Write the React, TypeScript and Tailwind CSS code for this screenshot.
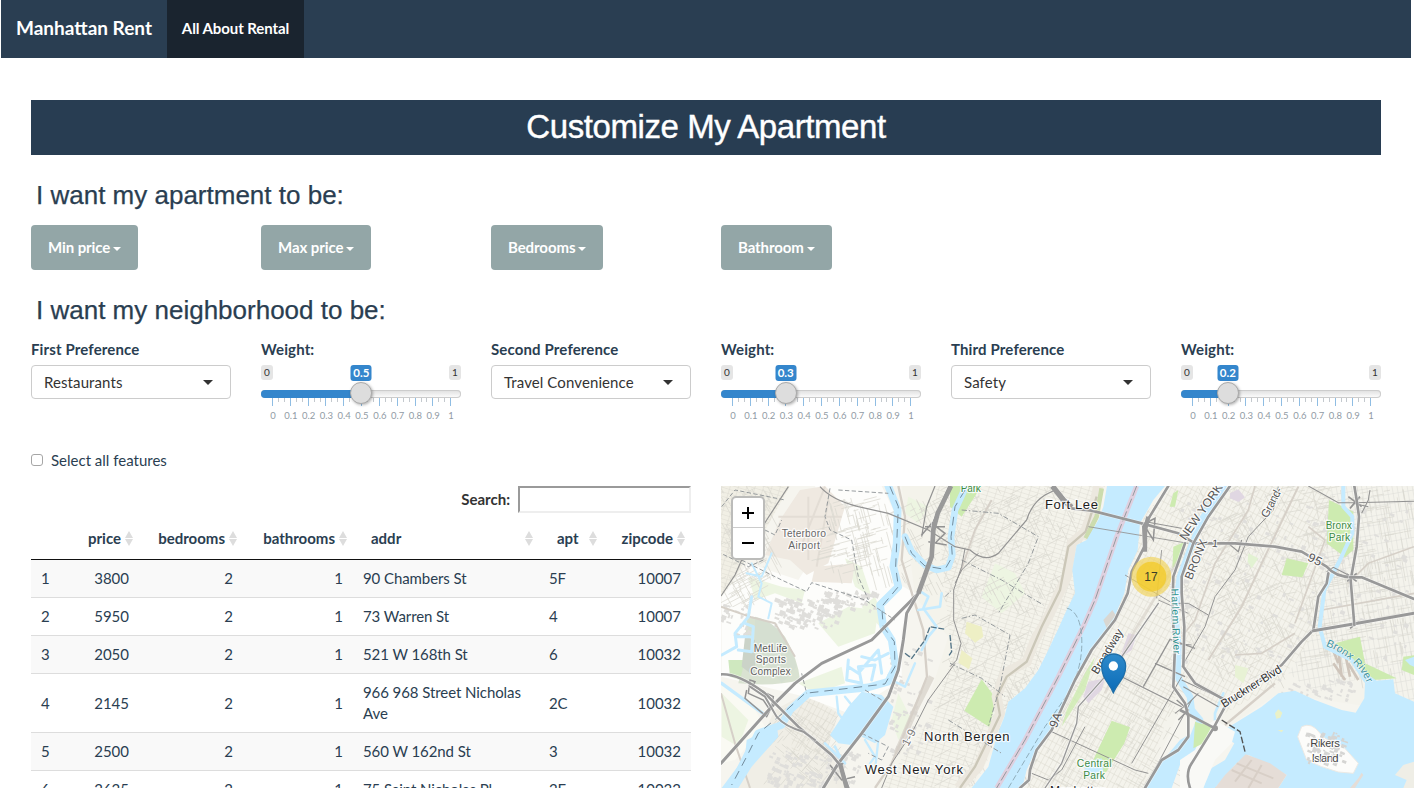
import React from "react";

const round = (n: number) => Math.round(n * 10) / 10;

function makeRandom(seed: number) {
  let s = seed;
  return () => {
    s = (s * 16807) % 2147483647;
    return s / 2147483647;
  };
}

type Area = { x: number; y: number; w: number; h: number; angle: number; n: number };

/** Short street segments scattered over an area along one bearing. */
function streets(area: Area, seed: number) {
  const rnd = makeRandom(seed);
  const a = (area.angle * Math.PI) / 180;
  let d = "";
  for (let i = 0; i < area.n; i++) {
    const x = area.x + rnd() * area.w;
    const y = area.y + rnd() * area.h;
    const len = 15 + rnd() * 60;
    const b = rnd() > 0.5 ? a : a + Math.PI / 2;
    d += `M${round(x)} ${round(y)}l${round(Math.cos(b) * len)} ${round(Math.sin(b) * len)}`;
  }
  return d;
}

/** Small building footprints. */
function blocks(area: Area, seed: number) {
  const rnd = makeRandom(seed);
  let d = "";
  for (let i = 0; i < area.n; i++) {
    const x = area.x + rnd() * area.w;
    const y = area.y + rnd() * area.h;
    const w = 5 + rnd() * 11;
    const h = 4 + rnd() * 8;
    d += `M${round(x)} ${round(y)}l${round(w)} ${round(w * 0.4)}l${round(-h * 0.4)} ${round(h)}l${round(-w)} ${round(-w * 0.4)}z`;
  }
  return d;
}

const STREETS = [
  streets({ x: 18, y: 18, w: 150, h: 340, angle: 62, n: 150 }, 11),
  streets({ x: 340, y: 50, w: 180, h: 220, angle: 75, n: 110 }, 23),
  streets({ x: 560, y: 18, w: 500, h: 300, angle: 63, n: 210 }, 37),
  streets({ x: 700, y: 300, w: 270, h: 600, angle: 62, n: 190 }, 41),
  streets({ x: 180, y: 680, w: 200, h: 220, angle: 40, n: 90 }, 53),
  streets({ x: 1390, y: 18, w: 320, h: 560, angle: 64, n: 230 }, 67),
  streets({ x: 1740, y: 18, w: 350, h: 560, angle: 80, n: 260 }, 71),
  streets({ x: 1000, y: 550, w: 380, h: 370, angle: 30, n: 160 }, 83),
];

const BLOCKS = [
  blocks({ x: 180, y: 350, w: 190, h: 90, angle: 0, n: 110 }, 5),
  blocks({ x: 330, y: 330, w: 150, h: 60, angle: 0, n: 55 }, 8),
  blocks({ x: 160, y: 810, w: 270, h: 105, angle: 0, n: 120 }, 13),
  blocks({ x: 520, y: 500, w: 120, h: 330, angle: 0, n: 70 }, 17),
  blocks({ x: 20, y: 370, w: 80, h: 90, angle: 0, n: 25 }, 19),
  blocks({ x: 1390, y: 60, w: 690, h: 480, angle: 0, n: 190 }, 29),
  blocks({ x: 1690, y: 590, w: 230, h: 70, angle: 0, n: 45 }, 31),
];

function Road({ d, w, color = "#999999" }: { d: string; w: number; color?: string }) {
  return (
    <g fill="none" strokeLinejoin="round" strokeLinecap="round">
      <path d={d} stroke="#ffffff" strokeOpacity={0.55} strokeWidth={w + 4} />
      <path d={d} stroke={color} strokeWidth={w} />
    </g>
  );
}

function MapLabel({
  x,
  y,
  children,
  size = 39,
  fill = "#1d1d1d",
  rotate = 0,
  length,
}: {
  x: number;
  y: number;
  children: string;
  size?: number;
  fill?: string;
  rotate?: number;
  length?: number;
}) {
  return (
    <text
      x={x}
      y={y}
      fontSize={size}
      fill={fill}
      textAnchor="middle"
      textLength={length}
      transform={`rotate(${rotate} ${x} ${y})`}
      stroke="#ffffff"
      strokeOpacity={0.8}
      strokeWidth={7}
      strokeLinejoin="round"
      paintOrder="stroke"
    >
      {children}
    </text>
  );
}

function RentMap() {
  return (
    <svg
      viewBox="18 18 2079 906"
      className="block h-[302px] w-[693px] font-['Liberation_Sans',sans-serif]"
      preserveAspectRatio="none"
    >
      <defs>
        <pattern id="grid-a" width="14" height="24" patternUnits="userSpaceOnUse" patternTransform="rotate(28)">
          <path d="M0 0H14M0 0V24" fill="none" stroke="#d9d6cc" strokeWidth="2.6" />
        </pattern>
        <pattern id="grid-b" width="24" height="13" patternUnits="userSpaceOnUse" patternTransform="rotate(17)">
          <path d="M0 0H24M0 0V13" fill="none" stroke="#dcd9d0" strokeWidth="2.6" />
        </pattern>
        <pattern id="grid-c" width="15" height="28" patternUnits="userSpaceOnUse" patternTransform="rotate(-10)">
          <path d="M0 0H15M0 0V28" fill="none" stroke="#d9d8d4" strokeWidth="2.6" />
        </pattern>
        <linearGradient id="pin" x1="0" y1="0" x2="0" y2="1">
          <stop offset="0" stopColor="#2e8acb" />
          <stop offset="1" stopColor="#0b6cb8" />
        </linearGradient>
      </defs>

      <rect x="18" y="18" width="2079" height="906" fill="#f6f5ef" />

      {/* built-up land */}
      <path d="M18 18H225L150 150L60 290L18 350Z" fill="#f1efe5" />
      <path d="M18 18H225L150 150L60 290L18 350Z" fill="url(#grid-b)" />
      <path d="M560 18H1170L1080 350L900 700L770 924H480L640 660L700 470L600 350Z" fill="#f4f3eb" />
      <path d="M660 18H1170L1080 350L1000 520L860 700L770 924H500L640 720L710 540L690 330Z" fill="url(#grid-b)" />
      <path d="M180 690L270 640L370 700L340 800L400 924H60L130 790Z" fill="#f0eee6" />
      <path d="M230 690L270 640L370 700L340 800L350 830L230 810Z" fill="url(#grid-a)" />
      <path d="M1370 18H2097V700L1690 640L1510 760L1390 700L1290 924H920L960 800L1080 560L1230 300L1290 100Z" fill="#f4f3ec" />
      <path d="M1370 18H1850L1810 450L1690 610L1530 700L1400 600L1280 924H930L960 800L1080 560L1230 300L1290 100Z" fill="url(#grid-a)" />
      <path d="M1850 18H2097V690L1950 590L1800 640L1720 580L1800 450Z" fill="url(#grid-c)" />

      {/* open marsh */}
      <path d="M300 18H500L550 120L530 300L600 340L560 450L560 600L400 700L270 650L20 590V350L100 250L250 300L340 160Z" fill="#fdfdfb" />
      <path d="M18 610L120 690L150 740L60 840L18 850Z" fill="#fafaf3" />
      <g fill="#edf5e2">
        <path d="M100 290L200 320L270 330L260 370L180 340L120 360Z" />
        <path d="M390 235L440 260L470 350L420 320Z" />
        <path d="M250 610L380 560L390 610L300 640Z" />
        <path d="M310 430L400 380L490 390L480 460L370 500Z" />
        <path d="M440 380L480 350L500 400L495 440Z" />
        <path d="M20 640L100 720L70 800L20 770Z" />
        <path d="M550 640L590 720L550 780L530 720Z" />
        <path d="M340 60L360 110L340 200L320 130Z" />
        <path d="M840 250L900 280L930 340L860 400L800 350Z" />
        <path d="M580 50L640 80L610 130L570 100Z" />
      </g>

      {/* airport and stadium */}
      <path d="M255 30L330 18L390 80L340 250L275 285L225 240L150 225L195 120Z" fill="#efe9e1" />
      <path d="M300 260L420 250L410 310L290 305Z" fill="#efe9e1" />
      <g stroke="#e3ddd5" strokeWidth="6" fill="none">
        <path d="M280 50V240M262 190L330 20M190 110H380M340 60L305 260" />
      </g>
      <path d="M95 410Q170 420 210 470Q250 540 255 600Q180 620 70 610L90 520Z" fill="#d9e2d1" />
      <path d="M120 410Q210 430 245 560L200 610L120 500Z" fill="#d5dfd1" />
      <path d="M40 540H90L75 600L45 590Z" fill="#cfe8bf" />
      <path d="M90 470L120 480V590L80 560Z" fill="#cbd3c8" />

      <path d={STREETS.join("")} fill="none" stroke="#dad8d0" strokeWidth="2.2" />
      <path d={BLOCKS.join("")} fill="#dfdedb" />

      {/* parks */}
      <g fill="#cdebb0">
        <path d="M705 18H800L740 110L705 80Z" />
        <path d="M800 598L842 655L824 742L748 692Z" />
        <path d="M1190 722L1245 742L1228 790L1168 885L1150 862L1105 900L1130 850Z" />
        <path d="M1842 60L1915 95L1915 210L1890 232L1835 190Z" />
        <path d="M1715 235L1780 250L1762 292L1700 285Z" />
        <path d="M1860 490L1935 470L1950 550L2045 595L1975 600L1920 545Z" />
        <path d="M2065 530L2097 526V585L2060 570Z" />
        <path d="M1440 725L1490 740L1465 790L1435 805Z" />
        <path d="M1375 200L1410 185L1395 250L1372 265Z" />
        <path d="M1375 40L1390 30L1380 80L1364 80Z" />
        <path d="M1140 530L1110 630L1040 740L1055 690L1110 580Z" opacity=".8" />
      </g>
      <path d="M755 425L800 440L805 470L780 488L750 460Z" fill="#eeefc5" />
      <path d="M740 510L772 535L762 568L730 548Z" fill="#eeefc5" />
      <path d="M1600 220L1630 235L1610 265L1598 245Z" fill="#e2f2d2" />
      <path d="M1560 555L1600 565L1585 610L1560 590Z" fill="#e8f2d5" />
      <g fill="#e0d7e2">
        <path d="M1120 605L1170 595L1160 630L1120 670L1105 650Z" />
        <path d="M1240 460L1265 465L1250 510L1215 535Z" />
        <path d="M1545 40L1570 28L1590 52L1570 66L1545 55Z" />
      </g>

      {/* Palisades cliff */}
      <path d="M1150 18L1130 100L1110 155L1070 190L1055 290L1000 410L960 480L935 545L870 580L845 650L855 700L790 860L730 924" fill="none" stroke="#ece8df" strokeWidth="30" />
      <path d="M1145 50L1112 155L1060 200L1035 330L980 440L935 545L875 590L845 650L855 705L780 860L735 924" fill="none" stroke="#cbc7b8" strokeWidth="7" />
      <path d="M1160 25L1145 110L1112 175" fill="none" stroke="#ccdcae" strokeWidth="14" />

      {/* rail corridors */}
      <g fill="none" stroke="#d6d0c8" strokeLinejoin="round">
        <path d="M550 18L570 110L560 240L600 370L625 450L636 590L600 680L560 780L530 850L480 924" strokeWidth="7" />
        <path d="M650 590L600 690L545 820" strokeWidth="18" opacity=".7" />
        <path d="M18 380L110 412L180 430L240 530" strokeWidth="6" />
        <path d="M18 640L60 790L105 924" strokeWidth="6" />
        <path d="M830 60L780 150L735 280" strokeWidth="6" />
        <path d="M1400 470L1440 420L1500 250L1600 90L1620 18" strokeWidth="5" />
        <path d="M1480 540L1580 380L1640 250L1750 20" strokeWidth="6" />
        <path d="M1560 525L1640 520L1740 460M1780 140L1830 180L1740 430" strokeWidth="5" />
        <path d="M1900 310L1960 250L2097 200M1820 390L2097 340" strokeWidth="5" />
        <path d="M1170 640L1260 450L1390 240" strokeWidth="8" opacity=".6" />
        <path d="M1530 735L1620 660L1680 610M1460 840L1500 924" strokeWidth="7" />
      </g>
      <path d="M1850 500L1870 550M1870 510L1880 590M1890 520L1905 590M1900 550L1930 600M1855 550L1890 600" stroke="#cfc5bb" strokeWidth="8" />

      {/* water */}
      <g fill="#c5ebff">
        <path d="M1176 18L1165 80L1150 120L1115 180L1085 195L1072 270L1080 340L1055 390L1028 450L1000 510L970 570L930 625L880 665L868 710L845 770L820 860L770 924H922L935 870L960 815L1000 760L1080 600L1130 508L1195 420L1228 340L1240 270L1268 210L1275 130L1315 60L1350 18Z" />
        <path d="M345 765L400 680L440 635L500 645L535 680L510 765L480 790L440 770L410 795L370 790Z" />
        <path d="M1510 758L1560 730L1640 680L1690 640L1740 632L1800 660L1880 690L1922 698L1948 655L1950 610L1920 560L1960 585L1985 602L2035 598L2040 640L2097 665V924H1690L1715 885L1665 855L1600 825L1565 850L1500 924H1465L1480 870L1530 840L1558 790Z" />
        <path d="M1395 780L1425 762L1440 790L1470 800L1430 830L1400 840L1370 924H1290L1320 870Z" />
        <path d="M95 780L185 735L190 770L110 860L70 924H20L90 830Z" />
      </g>
      <g fill="none" stroke="#c5ebff" strokeLinejoin="round" strokeLinecap="round">
        <path d="M520 18L548 90L545 190L535 260L550 320L495 375L505 440L530 480L542 560L520 605L460 622L280 640L225 690L200 735L130 760L95 830L55 910" strokeWidth="23" />
        <path d="M570 170L590 215L630 255L665 270L700 262L712 225L708 170L720 90L750 25" strokeWidth="20" />
        <path d="M20 525L65 500L60 460L100 410L110 350M70 510L110 515L115 440L90 430M65 470L105 470" strokeWidth="9" />
        <path d="M110 250L140 310L130 350L170 370L160 415M95 280L140 290L170 220" strokeWidth="6" />
        <path d="M610 330L640 350L625 385L665 440L640 470L620 510M610 390L675 380L680 340" strokeWidth="8" />
        <path d="M400 540L395 600L440 610L430 560L480 555L470 600M400 560L430 580L490 510L500 580M440 530L480 540L520 520" strokeWidth="9" />
        <path d="M365 650L370 700L400 740M390 650L430 700M450 780L480 830L465 850M490 780L480 870M530 600L570 620L600 550" strokeWidth="7" />
        <path d="M20 610L150 705" strokeWidth="10" />
        <path d="M360 800L380 840M330 790L390 850" strokeWidth="8" />
        <path d="M1525 18L1460 120L1425 210L1395 290L1380 400L1390 500L1388 590L1425 650L1430 690L1455 720L1435 770L1395 810" strokeWidth="20" />
        <path d="M1885 18L1885 80L1912 110L1912 160L1875 240L1828 330L1814 440L1830 500L1910 540L1950 600" strokeWidth="12" />
        <path d="M1525 640L1500 700L1500 740" strokeWidth="8" />
      </g>

      {/* shoreline details and islands */}
      <path d="M1165 420L1192 390L1202 405L1175 445Z" fill="#d9d7d2" />
      <path d="M1760 740Q1790 725 1815 760L1830 775L1885 800L1930 850L1915 880L1870 876L1820 860L1775 840L1748 770Z" fill="#fcfcfa" stroke="#eceae5" strokeWidth="3" />
      <path d={blocks({ x: 1775, y: 755, w: 110, h: 90, angle: 0, n: 65 }, 61)} fill="#d5d5d3" />
      <path d="M1680 700L1690 688L1702 698L1696 713L1684 716ZM1688 750H1705L1700 757Z" fill="#eaf1c8" />
      <path d="M1395 840L1440 810L1475 735L1500 720L1560 755L1550 790L1500 840L1465 924H1395Z" fill="#f9f9f6" />
      <path d="M1440 725L1490 740L1465 790L1435 805Z" fill="#cdebb0" />
      <path d="M1530 885L1592 823L1665 850L1715 885L1690 924H1500Z" fill="#e5ddd7" />
      <path d="M1565 850L1675 895M1610 840L1560 905M1640 855L1600 924M1550 870L1640 910" stroke="#d8cfc7" strokeWidth="6" />
      <path d="M1930 895L1940 878L1945 885L1920 924H1905Z" fill="#e5ddd7" />
      <path d="M2040 885L2065 855L2097 845V924H2065L2075 900Z" fill="#efeee6" />
      <path d="M1115 845L1160 835L1165 875L1145 900L1105 885Z" fill="#c5ebff" />
      <path d="M2070 540L2097 530V560L2085 555Z" fill="#c5ebff" />
      <path d="M365 905L390 880L400 924H365" fill="#efede5" />

      {/* state line in the Hudson */}
      <path d="M1265 18L1205 170L1140 360L1105 440L1030 590L930 780L845 924" fill="none" stroke="#dfd0df" strokeWidth="15" />
      <g fill="none" stroke="#8f9498" strokeWidth="2.8">
        <path d="M1265 18L1205 170L1140 360L1105 440L1030 590L930 780L845 924" strokeDasharray="32 9" />
        <path d="M525 20L550 80L542 260L550 320L500 380L505 440L538 485L540 560L510 612L400 625L270 640L215 690L130 760L95 830L50 915" stroke="#6d8494" strokeDasharray="26 18" />
        <path d="M570 170L590 220L630 258L690 268L712 230L708 170L720 80L750 30" stroke="#6d8494" strokeDasharray="26 18" />
        <path d="M1055 384Q1095 395 1100 470Q1105 560 1060 640L990 740L880 924" stroke="#8ca9b6" strokeDasharray="18 8" />
        <path d="M145 240L100 260L18 220M80 240L200 300L275 335L290 308L450 360L540 420M345 25L330 110L345 150L410 180L430 290L460 360M150 150L180 165L200 120M20 80L60 30L210 60M370 30L520 40M260 580L275 640" strokeDasharray="13 7" />
        <path d="M690 350L710 330M740 240L860 300L985 375M740 90L850 100L970 170L940 250L850 400M740 415L780 405L885 465L855 620L820 740M705 550L800 595L870 650M700 720L860 820" strokeDasharray="16 6 4 6" />
        <path d="M570 520L590 535L630 480L645 440L690 448M705 465L710 515L700 530" stroke="#527386" strokeWidth="4" strokeDasharray="18 5" />
        <path d="M450 630L500 660M440 760L520 800L500 840L460 820" strokeDasharray="14 8" />
        <path d="M1520 720L1575 755L1590 815" stroke="#555" strokeWidth="4" strokeDasharray="20 7" />
      </g>

      {/* secondary streets */}
      <g fill="none" stroke="#939393" strokeWidth="3.6">
        <path d="M315 20Q350 60 430 80L520 100L640 150L720 200L765 210Q810 250 850 220L935 120Q950 70 990 45L1020 30" />
        <path d="M220 20L155 120L80 240L60 285L18 348M660 18L635 80L620 170" />
        <path d="M720 550L640 660L590 760L530 850L500 924" strokeWidth="3" />
        <path d="M750 205L740 260L716 330V420L738 490L725 540L705 560M790 220L740 270L720 310" strokeWidth="3" />
        <path d="M1120 140L1420 190M1340 210L1325 355M1230 285L1390 380M1330 360L1420 400" strokeWidth="2.6" />
        <path d="M1220 590L1400 680M1285 620L1365 478L1440 505M1320 550L1410 590" />
        <path d="M1010 755L1260 870L1300 880M950 880L1000 900L1040 870L1110 740M1290 924L1430 660M1250 850L1400 590" strokeWidth="3" />
        <path d="M1690 20L1675 90L1600 170L1560 270L1500 350L1470 440L1400 560M1390 370L1420 370L1480 405M1375 490L1430 495M1290 125L1400 145" strokeWidth="3" />
        <path d="M1780 18L1870 68H1915L2097 64M1915 70L1960 80M1940 100L1960 60L1965 30M1400 600L1530 660M1405 620L1510 680M1450 640L1420 670L1380 700" strokeWidth="3.2" />
        <path d="M1540 190L1570 215L1580 180M1835 275L1855 262L1900 285" strokeWidth="3.5" />
        <path d="M95 630L90 655L155 710L165 690L145 660L100 640L105 600L120 605L110 625M155 640L175 650L170 680" strokeWidth="4.5" />
        <path d="M620 165L650 130L690 160L660 190M630 140H690M640 185L695 195M345 855L380 900L420 890M350 870L385 850M1280 135L1320 115L1315 180L1290 140M1385 660L1420 690L1390 720" strokeWidth="4.5" />
        <path d="M1900 50L1940 80M1905 85L1935 50M1895 282L1925 304M1897 304L1925 280M1905 445L1932 425" strokeWidth="5" />
      </g>

      {/* highways */}
      <Road d="M705 18L655 130L650 230L610 340L470 480L320 550L240 610L170 680L18 850" w={9} />
      <Road d="M655 130L650 230L610 340L575 400L565 480L550 570L520 650L440 760L370 850L325 924" w={9} />
      <path d="M708 18L668 100L655 150L650 230L610 340" fill="none" stroke="#999" strokeWidth="14" strokeLinejoin="round" />
      <Road d="M18 583Q70 580 150 640L250 740L350 825L375 855L400 924" w={8} />
      <Road d="M105 620L150 650L185 710Q210 740 265 755L300 780" w={6} />
      <path d="M375 850L395 924" stroke="#999" strokeWidth="13" />
      <Road d="M1015 18L1050 60L1070 85L1130 92L1280 130L1390 160L1440 190L1560 190L1680 200L1760 215L1835 260Q1860 290 1910 292" w={8} />
      <path d="M1012 18L1045 60L1070 82" fill="none" stroke="#999" strokeWidth="16" />
      <Road d="M1360 18L1310 100L1285 140L1288 200L1250 275L1238 340L1200 420L1130 510L1080 600L1010 750L965 810L945 870L942 900L915 924" w={8} />
      <path d="M1300 110L1290 150V215" stroke="#999" strokeWidth="13" fill="none" />
      <Road d="M1330 370L1210 545L1090 680L1085 730L1040 850L990 924" w={4} />
      <Road d="M1545 18L1480 110L1435 190L1400 290L1400 340L1408 440L1405 560L1440 610L1530 660" w={8} />
      <Road d="M1410 190L1375 290L1372 400L1380 500L1375 620L1410 670L1420 710V770L1390 810L1340 840L1290 924" w={8} />
      <Road d="M1840 280L1835 310L1810 350L1795 450L1760 485L1700 555L1590 630L1530 680L1495 745L1430 850Q1410 880 1425 924" w={8} />
      <Road d="M1795 452L1915 432L2097 400" w={9} />
      <Road d="M1918 18L1925 60L1932 110L1925 200L1907 300L1918 435" w={8} />
      <Road d="M1905 292L1940 292L2097 357" w={8} />
      <path d="M1395 690L1500 745" stroke="#999" strokeWidth="8" />
      <circle cx="1500" cy="745" r="9" fill="#999" />

      {/* labels */}
      <g letterSpacing="1.2">
        <MapLabel x={267} y={171} size={31} length={134} fill="#686868">Teterboro</MapLabel>
        <MapLabel x={268} y={207} size={31} length={96} fill="#686868">Airport</MapLabel>
        <MapLabel x={167} y={515} size={31} length={102} fill="#5e5e5e">MetLife</MapLabel>
        <MapLabel x={168} y={549} size={31} length={92} fill="#5e5e5e">Sports</MapLabel>
        <MapLabel x={167} y={584} size={31} length={123} fill="#5e5e5e">Complex</MapLabel>
        <MapLabel x={592} y={777} size={34} rotate={-62} fill="#777">1-9</MapLabel>
        <MapLabel x={756} y={783} length={258}>North Bergen</MapLabel>
        <MapLabel x={597} y={882} length={296}>West New York</MapLabel>
        <MapLabel x={1070} y={87} length={160}>Fort Lee</MapLabel>
        <MapLabel x={768} y={35} size={31} length={62} fill="#3d8b45">Park</MapLabel>
        <MapLabel x={1138} y={860} size={31} length={106} fill="#3d8b45">Central</MapLabel>
        <MapLabel x={1138} y={896} size={31} length={66} fill="#3d8b45">Park</MapLabel>
        <MapLabel x={1091} y={945} size={36} length={172}>Manhattan</MapLabel>
        <MapLabel x={1187} y={520} size={35} rotate={-59} length={152} fill="#444">Broadway</MapLabel>
        <MapLabel x={1033} y={724} size={36} rotate={-68} fill="#555">9A</MapLabel>
        <MapLabel x={1372} y={425} size={31} rotate={88} length={198} fill="#2e918e">Harlem River</MapLabel>
        <MapLabel x={1468} y={102} size={36} rotate={-55} length={198} fill="#555">NEW YORK</MapLabel>
        <MapLabel x={1454} y={242} size={35} rotate={-68} length={128} fill="#555">BRONX</MapLabel>
        <MapLabel x={1680} y={72} size={34} rotate={-62} length={98} fill="#555">Grand-</MapLabel>
        <MapLabel x={1500} y={201} size={32} rotate={6} fill="#555">1</MapLabel>
        <MapLabel x={1795} y={250} size={37} rotate={27} fill="#555">95</MapLabel>
        <MapLabel x={1872} y={147} size={31} length={80} fill="#3d8b45">Bronx</MapLabel>
        <MapLabel x={1874} y={183} size={31} length={66} fill="#3d8b45">Park</MapLabel>
        <MapLabel x={1615} y={629} size={35} rotate={-32} length={208} fill="#333">Bruckner-Blvd</MapLabel>
        <MapLabel x={1831} y={801} size={34} length={90} fill="#444">Rikers</MapLabel>
        <MapLabel x={1831} y={846} size={34} length={82} fill="#444">Island</MapLabel>
      </g>
      <path id="bronx-river-line" d="M1832 498Q1930 535 1960 620" fill="none" />
      <text fontSize="32" fill="#3d92a1" stroke="#fff" strokeWidth="4" strokeOpacity=".6" paintOrder="stroke">
        <textPath href="#bronx-river-line" textLength="172">Bronx River</textPath>
      </text>

      {/* cluster and pin */}
      <circle cx="1309" cy="290" r="60" fill="#f1d357" fillOpacity=".65" />
      <circle cx="1309" cy="290" r="45" fill="#f3cb2a" fillOpacity=".8" />
      <text x="1308" y="302" fontSize="36" textAnchor="middle" fill="#3a3d28">17</text>
      <path d="M1195 638C1180 605 1160 595 1160 558A35 35 0 0 1 1232 558C1232 595 1210 605 1195 638Z" fill="url(#pin)" stroke="#1f6fa9" strokeWidth="4" />
      <circle cx="1195" cy="558" r="14" fill="#fff" />
    </svg>
  );
}

function Caret({ className }: { className: string }) {
  return (
    <svg viewBox="0 0 10 5" className={className} fill="currentColor">
      <path d="M0 0H10L5 5Z" />
    </svg>
  );
}

function DropButton({ label, width }: { label: string; width: string }) {
  return (
    <div className="w-[230px]">
      <button
        className={`${width} flex h-[45px] items-center gap-[3px] rounded bg-[#93a6a7] pl-[17px] text-[15px] font-bold tracking-[-0.08px] whitespace-nowrap text-white`}
      >
        {label}
        <Caret className="mt-[3px] h-1 w-2" />
      </button>
    </div>
  );
}

function Select({ label, value }: { label: string; value: string }) {
  return (
    <div className="w-[230px]">
      <div className="h-[26px] text-[15px] leading-[21px] font-bold tracking-[0.14px]">{label}</div>
      <div className="flex h-[34px] w-[200px] items-center justify-between rounded border border-[#cccccc] pr-[17px] pl-3 text-[15px] text-[#333333]">
        <span className="tracking-[0.1px]">{value}</span>
        <Caret className="h-[5px] w-[10px]" />
      </div>
    </div>
  );
}

const TICKS = Array.from({ length: 31 }, (_, i) => i);
const SCALE = ["0", "0.1", "0.2", "0.3", "0.4", "0.5", "0.6", "0.7", "0.8", "0.9", "1"];

function Slider({ value }: { value: number }) {
  const center = 11.3 + value * 178;
  return (
    <div className="w-[230px]">
      <div className="h-[26px] text-[15px] leading-[21px] font-bold tracking-[0.14px]">Weight:</div>
      <div className="relative h-[60px] w-[200px]">
        <div className="flex h-[25px] justify-between text-[10px] leading-[15px] text-[#333333]">
          <span className="h-[15px] w-3 rounded-[3px] bg-[#e5e5e5] text-center">0</span>
          <span className="h-[15px] w-3 rounded-[3px] bg-[#e5e5e5] text-center">1</span>
        </div>
        <div className="h-2 rounded-full bg-linear-to-b from-[#dedede] to-white shadow-[inset_0_0_0_1px_#cccccc]">
          <div className="h-2 rounded-l-full bg-[#3486cc]" style={{ width: center }} />
        </div>
        <svg viewBox="0 0 200 8" className="block h-2 w-[200px]" shapeRendering="crispEdges">
          {TICKS.map((i) => (
            <rect
              key={i}
              x={Math.round(11 + i * 5.94)}
              y="0"
              width="1"
              height={i % 3 === 0 ? 8 : 4}
              fill={i % 3 === 0 ? "#8fbde3" : "#c4c9ce"}
            />
          ))}
        </svg>
        <div className="mt-[3px] flex justify-between pr-[10px] pl-3 text-[9.5px] leading-[13px] text-[#919ba5]">
          {SCALE.map((s) => (
            <span key={s} className="flex w-0 justify-center">
              <span>{s}</span>
            </span>
          ))}
        </div>
        <div
          className="absolute top-0 h-4 w-[21px] -translate-x-1/2 rounded-[3px] bg-[#3486cc] text-center text-[11.5px] leading-4 font-bold text-white"
          style={{ left: center }}
        >
          {value}
        </div>
        <div
          className="absolute top-[17px] size-[22px] -translate-x-1/2 rounded-full border border-[#aaaaaa] bg-[#dddddd] shadow-[1px_1px_3px_rgba(0,0,0,0.3)]"
          style={{ left: center }}
        />
      </div>
    </div>
  );
}

function SortIcon() {
  return (
    <svg viewBox="0 0 8 15" className="h-[15px] w-2 shrink-0" fill="#dddddd">
      <path d="M4 0L8 7H0ZM0 8H8L4 15Z" />
    </svg>
  );
}

const COLUMNS: { name: string; left?: boolean }[] = [
  { name: "price" },
  { name: "bedrooms" },
  { name: "bathrooms" },
  { name: "addr", left: true },
  { name: "apt", left: true },
  { name: "zipcode" },
];

const ROWS = [
  ["3800", "2", "1", "90 Chambers St", "5F", "10007"],
  ["5950", "2", "1", "73 Warren St", "4", "10007"],
  ["2050", "2", "1", "521 W 168th St", "6", "10032"],
  ["2145", "2", "1", "966 968 Street Nicholas Ave", "2C", "10032"],
  ["2500", "2", "1", "560 W 162nd St", "3", "10032"],
  ["2625", "2", "1", "75 Saint Nicholas Pl", "2E", "10032"],
];

function Listings() {
  return (
    <div className="w-[690px]">
      <div className="flex h-[27px] w-[660px] items-center justify-end gap-2 text-[15px] font-bold text-[#333333]">
        Search:
        <input className="h-[27px] w-[173px] border-2 border-t-[#9a9a9a] border-r-[#eeeeee] border-b-[#eeeeee] border-l-[#9a9a9a] bg-white" />
      </div>
      <table className="mt-[5px] w-[660px] table-fixed border-separate border-spacing-0 text-[15px] leading-[21px]">
        <colgroup>
          <col className="w-[38px]" />
          <col className="w-[70px]" />
          <col className="w-[104px]" />
          <col className="w-[110px]" />
          <col className="w-[186px]" />
          <col className="w-[64px]" />
          <col className="w-[88px]" />
        </colgroup>
        <thead>
          <tr className="h-[42px]">
            <th className="border-b border-[#111111]" />
            {COLUMNS.map((c) => (
              <th key={c.name} className="border-b border-[#111111] p-0 font-bold">
                <div
                  className={
                    c.left
                      ? "flex items-center justify-between pr-[6px] pl-[18px]"
                      : "flex items-center justify-end gap-1 pr-[6px]"
                  }
                >
                  {c.name}
                  <SortIcon />
                </div>
              </th>
            ))}
          </tr>
        </thead>
        <tbody>
          {ROWS.map((row, i) => (
            <tr key={row[3]} className={i % 2 === 0 ? "bg-[#f9f9f9]" : "bg-white"}>
              <td className="border-b border-[#dddddd] px-[10px] py-2">{i + 1}</td>
              {row.map((cell, j) => (
                <td
                  key={j}
                  className={
                    j === 3 || j === 4
                      ? "border-b border-[#dddddd] px-[10px] py-2 text-left tracking-[-0.08px]"
                      : "border-b border-[#dddddd] px-[10px] py-2 text-right"
                  }
                >
                  {cell}
                </td>
              ))}
            </tr>
          ))}
        </tbody>
      </table>
    </div>
  );
}

export default function App() {
  return (
    <div className="h-[788px] w-[1419px] overflow-hidden bg-white font-[Lato,sans-serif] text-[#2a3e51]">
      <nav className="ml-px flex h-[58px] w-[1410px] bg-[#2a3e52] text-white">
        <div className="flex w-[166px] items-center pb-[2px] pl-[15px] text-[19px] font-bold whitespace-nowrap">Manhattan Rent</div>
        <div className="flex w-[137px] items-center justify-center bg-[#1a242f] pb-[2px] text-[15px] font-bold tracking-[-0.08px] whitespace-nowrap">
          All About Rental
        </div>
      </nav>
      <main className="pt-[42px] pl-[31px]">
        <h1 className="h-[55px] w-[1350px] bg-[#283d52] text-center font-['Liberation_Sans',sans-serif] text-[33px] leading-[54px] tracking-[-0.42px] text-white [-webkit-text-stroke:0.4px_white]">
          Customize My Apartment
        </h1>
        <h2 className="mt-[25px] pl-[5px] font-['Liberation_Sans',sans-serif] text-[26px] leading-[30px] [-webkit-text-stroke:0.25px_#2a3e51]">
          I want my apartment to be:
        </h2>
        <div className="mt-[15px] flex">
          <DropButton label="Min price" width="w-[107px]" />
          <DropButton label="Max price" width="w-[110px]" />
          <DropButton label="Bedrooms" width="w-[112px]" />
          <DropButton label="Bathroom" width="w-[111px]" />
        </div>
        <h2 className="mt-[25px] pl-[5px] font-['Liberation_Sans',sans-serif] text-[26px] leading-[30px] [-webkit-text-stroke:0.25px_#2a3e51]">
          I want my neighborhood to be:
        </h2>
        <div className="mt-[14px] flex">
          <Select label="First Preference" value="Restaurants" />
          <Slider value={0.5} />
          <Select label="Second Preference" value="Travel Convenience" />
          <Slider value={0.3} />
          <Select label="Third Preference" value="Safety" />
          <Slider value={0.2} />
        </div>
        <label className="mt-[25px] flex h-[21px] items-center gap-2 text-[15px]">
          <input
            type="checkbox"
            className="mb-[2px] size-3 appearance-none rounded-[3px] border border-[#a6a6a6] bg-white"
          />
          Select all features
        </label>
        <div className="mt-[15px] flex">
          <Listings />
          <div className="relative h-[302px] w-[693px] overflow-hidden">
            <RentMap />
            <div className="absolute top-[10px] left-[10px] flex w-[34px] flex-col rounded-[5px] border-2 border-[#bcbcba] bg-white text-black">
              <button className="flex h-[30px] items-center justify-center border-b border-[#cccccc]">
                <svg viewBox="0 0 12 12" className="size-3" stroke="currentColor" strokeWidth="2">
                  <path d="M0 6H12M6 0V12" />
                </svg>
              </button>
              <button className="flex h-[30px] items-center justify-center">
                <svg viewBox="0 0 12 12" className="size-3" stroke="currentColor" strokeWidth="2">
                  <path d="M0 6H12" />
                </svg>
              </button>
            </div>
          </div>
        </div>
      </main>
    </div>
  );
}
